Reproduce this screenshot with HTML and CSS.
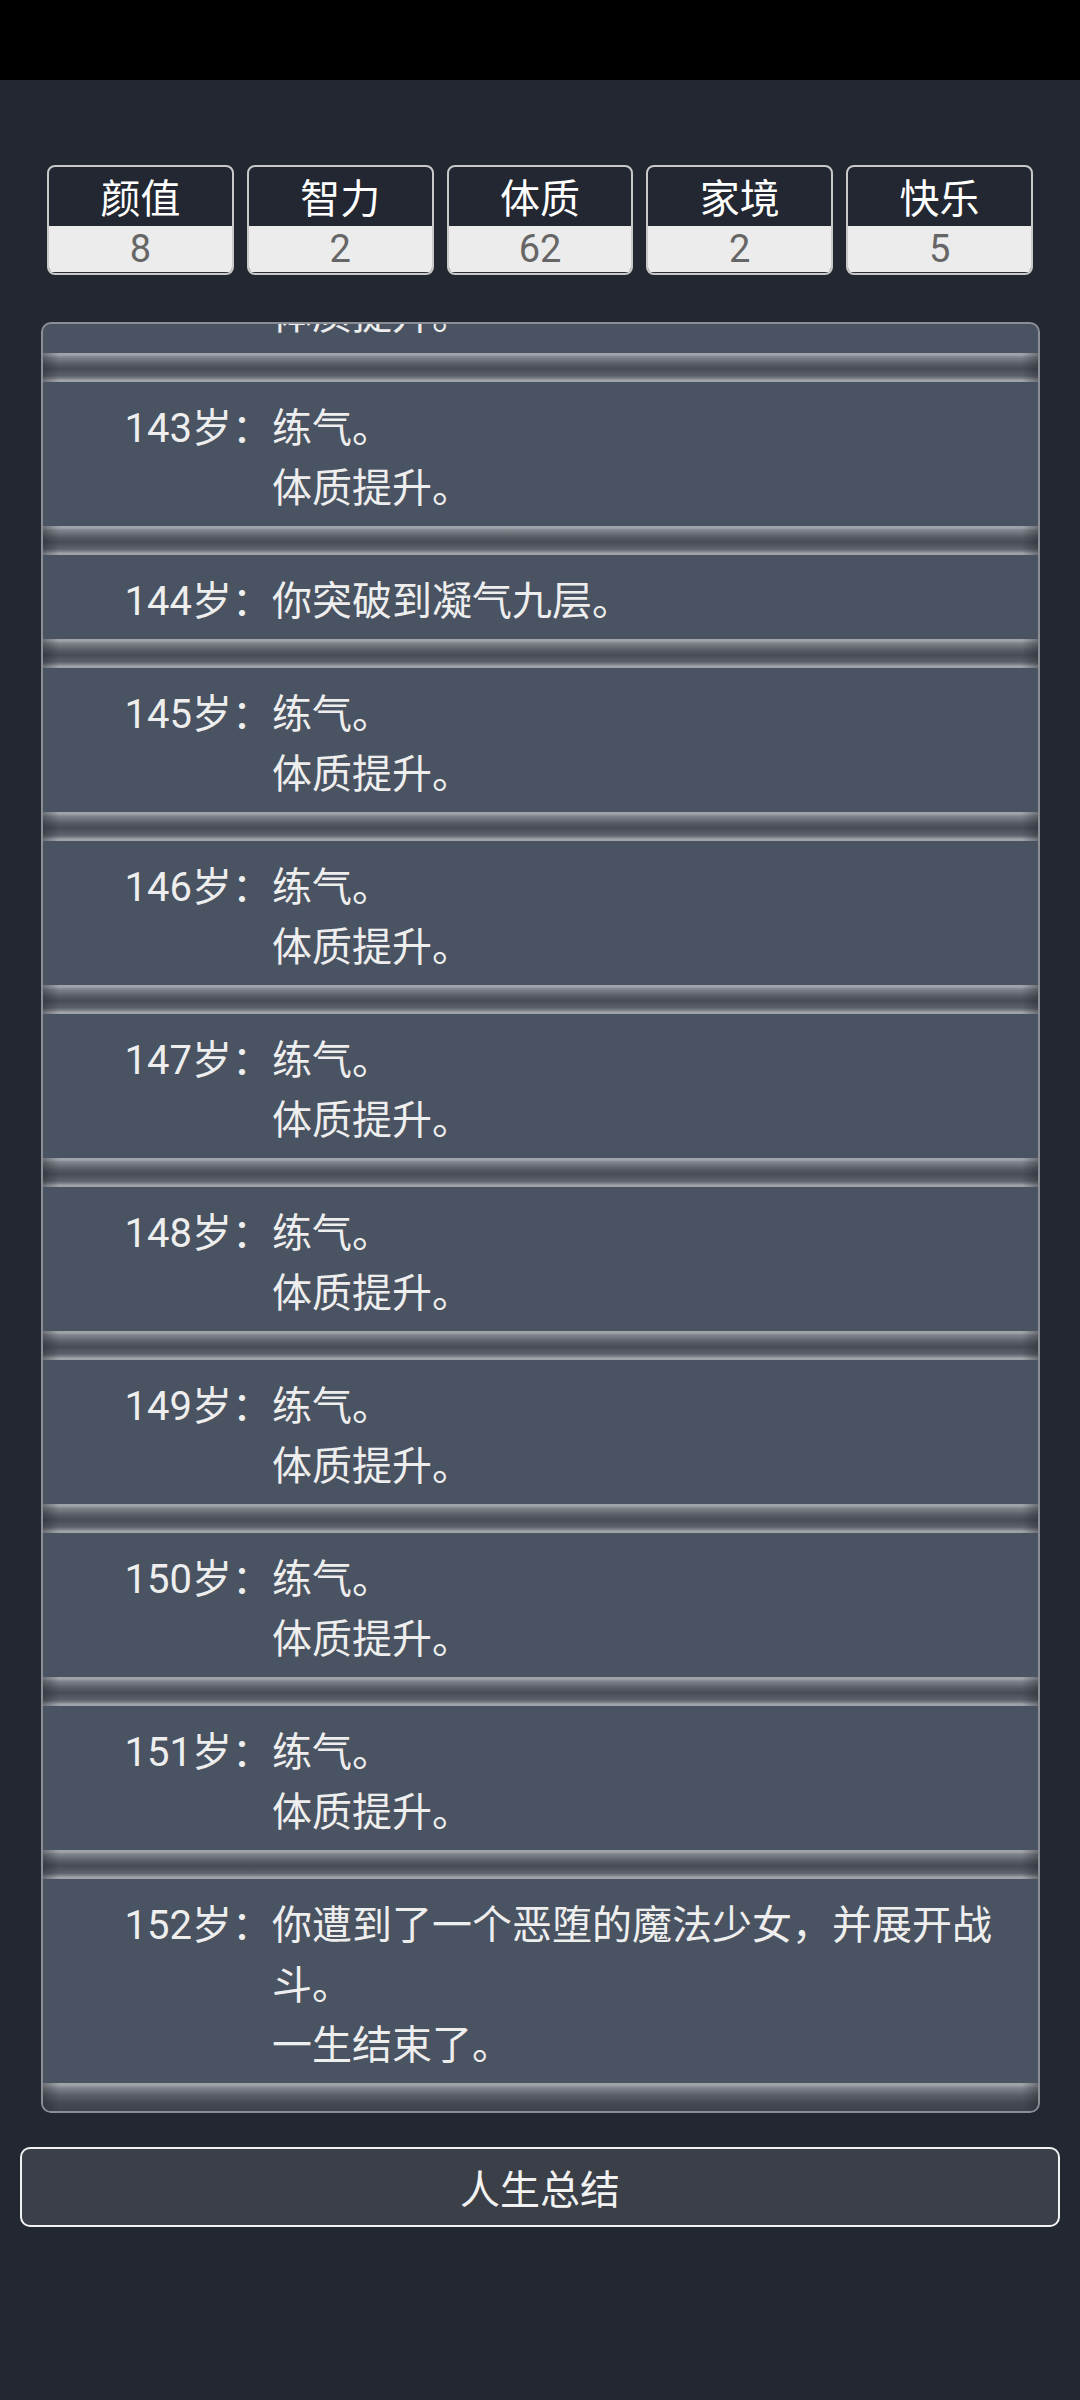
FILE: index.html
```html
<!DOCTYPE html>
<html lang="zh-CN">
<head>
  <meta charset="UTF-8"/>
  <meta name="viewport" content="width=device-width, initial-scale=1.0"/>
  <title>人生重开模拟器</title>
  <link rel="stylesheet" href="styles.css">
</head>
<body>

<div class="statusbar"></div>

<div class="stats">
  <div class="stat"><div class="stat-name">颜值</div><div class="stat-value">8</div></div>
  <div class="stat"><div class="stat-name">智力</div><div class="stat-value">2</div></div>
  <div class="stat"><div class="stat-name">体质</div><div class="stat-value">62</div></div>
  <div class="stat"><div class="stat-name">家境</div><div class="stat-value">2</div></div>
  <div class="stat"><div class="stat-name">快乐</div><div class="stat-value">5</div></div>
</div>

<div class="trajectory">
  <ul class="lines">
    <li><span class="age">142岁：</span><span class="event">练气。<br>体质提升。</span></li>
    <li><span class="age">143岁：</span><span class="event">练气。<br>体质提升。</span></li>
    <li><span class="age">144岁：</span><span class="event">你突破到凝气九层。</span></li>
    <li><span class="age">145岁：</span><span class="event">练气。<br>体质提升。</span></li>
    <li><span class="age">146岁：</span><span class="event">练气。<br>体质提升。</span></li>
    <li><span class="age">147岁：</span><span class="event">练气。<br>体质提升。</span></li>
    <li><span class="age">148岁：</span><span class="event">练气。<br>体质提升。</span></li>
    <li><span class="age">149岁：</span><span class="event">练气。<br>体质提升。</span></li>
    <li><span class="age">150岁：</span><span class="event">练气。<br>体质提升。</span></li>
    <li><span class="age">151岁：</span><span class="event">练气。<br>体质提升。</span></li>
    <li><span class="age">152岁：</span><span class="event">你遭到了一个恶堕的魔法少女，并展开战斗。<br>一生结束了。</span></li>
  </ul>
</div>

<button class="summary">人生总结</button>

</body>
</html>
```

FILE: styles.css
```css
html, body {
  margin: 0;
  padding: 0;
}
body {
  width: 1080px;
  height: 2400px;
  overflow: hidden;
  background: #222731;
  color: #eeeeee;
  font-family: Roboto, "Noto Sans CJK SC", sans-serif;
}
.statusbar {
  height: 80px;
  background: #000;
}
.stats {
  display: grid;
  grid-template-columns: repeat(5, 1fr);
  gap: 13px;
  margin: 85px 47px 0;
}
.stat {
  border: 2px solid #c9c9c9;
  border-radius: 8px;
  overflow: hidden;
  text-align: center;
}
.stat-name {
  height: 52px;
  padding-top: 7px;
  line-height: 52px;
  font-size: 40px;
  color: #fff;
}
.stat-value {
  height: 46px;
  line-height: 46px;
  font-size: 38px;
  color: #666;
  background: #ececec;
  border-bottom: 1px solid #2c3038;
}
.trajectory {
  box-sizing: border-box;
  height: 1791px;
  margin: 47px 40px 0 41px;
  border: 2px solid #8b8f95;
  border-radius: 10px;
  background: #4a5361;
  overflow: hidden;
}
.lines {
  list-style: none;
  margin: -115px 0 0;
  padding: 0;
}
.lines li {
  display: grid;
  grid-template-columns: 229px 1fr;
  padding: 17px 0 0;
  font-size: 40px;
  line-height: 60px;
}
.age {
  text-align: right;
}
.event {
  padding-right: 26px;
}
.lines li::after {
  content: '';
  grid-column: 1 / -1;
  height: 29px;
  margin-top: 7px;
  background:
    linear-gradient(to right, rgba(30,33,40,.4), rgba(30,33,40,0) 16px, rgba(30,33,40,0) calc(100% - 16px), rgba(30,33,40,.4)),
    linear-gradient(to bottom, #a0a4aa 0, #a0a4aa 2px, #80858d 4px, #575c66 11px, #474c56 16px, #5c616b 23px, #868a91 26px, #a0a4aa 27px, #a0a4aa 29px);
}
.lines li:last-child::after {
  background:
    linear-gradient(to right, rgba(30,33,40,.4), rgba(30,33,40,0) 16px, rgba(30,33,40,0) calc(100% - 16px), rgba(30,33,40,.4)),
    linear-gradient(to bottom, #a0a4aa 0, #a0a4aa 2px, #7f848c 5px, #5a5f69 12px, #454952 20px, #3e424b 29px);
}
.summary {
  display: block;
  box-sizing: border-box;
  width: 1040px;
  height: 80px;
  margin: 34px 20px 0;
  border: 2px solid #f2f2f2;
  border-radius: 10px;
  background: #3b3f48;
  color: #f2f2f2;
  font-family: Roboto, "Noto Sans CJK SC", sans-serif;
  font-size: 40px;
  padding: 0;
}
```
